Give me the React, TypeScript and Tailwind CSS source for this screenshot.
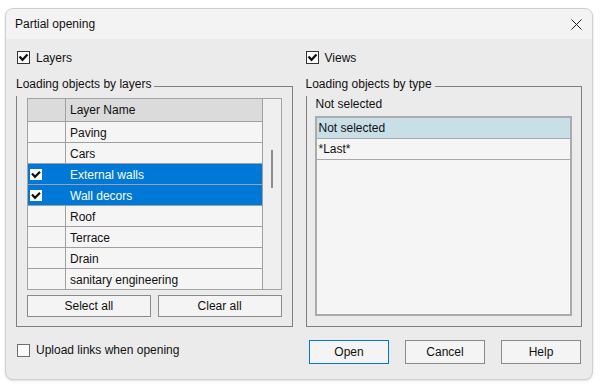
import { ReactNode } from "react";

const LAYERS = [
  { name: "Paving", on: false },
  { name: "Cars", on: false },
  { name: "External walls", on: true },
  { name: "Wall decors", on: true },
  { name: "Roof", on: false },
  { name: "Terrace", on: false },
  { name: "Drain", on: false },
  { name: "sanitary engineering", on: false },
];

function CheckBox({ checked }: { checked: boolean }) {
  return (
    <svg width="13" height="13" viewBox="0 0 13 13" className="shrink-0">
      <rect
        x="0.5"
        y="0.5"
        width="12"
        height="12"
        fill="#fbfbfb"
        stroke={checked ? "#333333" : "#6e6e6e"}
      />
      {checked && (
        <path d="M2.5 5.5 L5.5 8.8 L10.5 3.5" fill="none" stroke="#111" strokeWidth="2.2" />
      )}
    </svg>
  );
}

function CellCheck() {
  return (
    <svg width="12" height="11" viewBox="0 0 12 11">
      <rect x="0" y="0" width="12" height="11" fill="#ffffff" />
      <path d="M2 4.5 L5 7.8 L10 2.8" fill="none" stroke="#111" strokeWidth="2.2" />
    </svg>
  );
}

function Group({ label, children }: { label: string; children: ReactNode }) {
  return (
    <fieldset className="border border-[#7f7f7f] min-w-0">
      <legend className="leading-[14px] pb-[5px] pr-[3px] -ml-[1px]">{label}</legend>
      {children}
    </fieldset>
  );
}

function Button({ children, primary }: { children: ReactNode; primary?: boolean }) {
  return (
    <button
      className={
        "h-[24px] w-[80px] bg-[#f4f4f4] border " +
        (primary ? "border-[#0078d7]" : "border-[#8a8a8a]")
      }
    >
      {children}
    </button>
  );
}

export default function App() {
  return (
    <div
      className="w-[603px] h-[386px] bg-white pt-[8px] pl-[5px] text-[12px] text-[#111]"
      style={{ fontFamily: '"Liberation Sans", Arial, sans-serif' }}
    >
      <div className="w-[588px] h-[372px] rounded-lg border border-[#cfcfcf] bg-[#ebebeb] overflow-hidden shadow-sm">
        {/* Title bar */}
        <div className="h-[30px] bg-[#f3f3f3] flex items-center justify-between pl-[9px] pr-[10px]">
          <span>Partial opening</span>
          <svg width="11" height="11" viewBox="0 0 11 11">
            <path d="M0.5 0.5 L10.5 10.5 M10.5 0.5 L0.5 10.5" stroke="#222" strokeWidth="1" />
          </svg>
        </div>

        {/* Body */}
        <div className="px-[10px] pt-[12px]">
          <div className="grid grid-cols-2 gap-x-[13px]">
            {/* Left column */}
            <div>
              <label className="flex items-center gap-[6px] h-[13px] pl-[1px]">
                <CheckBox checked />
                <span>Layers</span>
              </label>
              <div className="mt-[13px]">
                <Group label="Loading objects by layers">
                  <div className="px-[10px] pt-[2px] pb-[9px]">
                    <div className="flex border border-[#a3a3a3] bg-[#f5f5f5]">
                      <div className="flex-1">
                        <div className="flex h-[23px] bg-[#dbdbdb] border-b border-[#a0a0a0]">
                          <div className="w-[38px] border-r border-[#a0a0a0]" />
                          <div className="flex-1 flex items-center pl-[4px]">Layer Name</div>
                        </div>
                        {LAYERS.map((l, i) => (
                          <div
                            key={l.name}
                            className={
                              "flex " +
                              (i < LAYERS.length - 1 ? "h-[21px] border-b border-[#a0a0a0] " : "h-[20px] ") +
                              (l.on ? "bg-[#0078d7] text-white" : "")
                            }
                          >
                            <div
                              className={
                                "w-[38px] border-r flex items-center pl-[2px] " +
                                (l.on ? "border-[#0078d7]" : "border-[#a0a0a0]")
                              }
                            >
                              {l.on && <CellCheck />}
                            </div>
                            <div className="flex-1 flex items-center pl-[4px] pt-[1px]">{l.name}</div>
                          </div>
                        ))}
                      </div>
                      <div className="w-[19px] border-l border-[#a0a0a0] bg-[#efefef] pt-[51px]">
                        <div className="w-[2px] h-[38px] bg-[#8c8c8c] ml-[8px]" />
                      </div>
                    </div>
                    <div className="flex gap-[7px] mt-[5px]">
                      <button className="flex-1 h-[22px] bg-[#f4f4f4] border border-[#8a8a8a]">Select all</button>
                      <button className="flex-1 h-[22px] bg-[#f4f4f4] border border-[#8a8a8a]">Clear all</button>
                    </div>
                  </div>
                </Group>
              </div>
            </div>

            {/* Right column */}
            <div>
              <label className="flex items-center gap-[6px] h-[13px]">
                <CheckBox checked />
                <span>Views</span>
              </label>
              <div className="mt-[13px]">
                <Group label="Loading objects by type">
                  <div className="pl-[8px] pr-[9px] pt-[1px] pb-[10px]">
                    <div className="leading-[14px] h-[14px] pl-[1px]">Not selected</div>
                    <div className="mt-[5px] h-[200px] border-2 border-[#ababab] bg-[#f5f5f5]">
                      <div className="h-[21px] flex items-center pl-[2px] bg-[#c8dfe8] border-b border-[#a8a8a8]">
                        Not selected
                      </div>
                      <div className="h-[21px] flex items-center pl-[2px] border-b border-[#a8a8a8]">*Last*</div>
                    </div>
                  </div>
                </Group>
              </div>
            </div>
          </div>

          {/* Bottom row */}
          <div className="grid grid-cols-2 gap-x-[13px] mt-[13px]">
            <label className="flex items-center gap-[6px] h-[20px] pl-[1px]">
              <CheckBox checked={false} />
              <span>Upload links when opening</span>
            </label>
            <div className="flex justify-end gap-[16px] pr-[1px]">
              <Button primary>Open</Button>
              <Button>Cancel</Button>
              <Button>Help</Button>
            </div>
          </div>
        </div>
      </div>
    </div>
  );
}
